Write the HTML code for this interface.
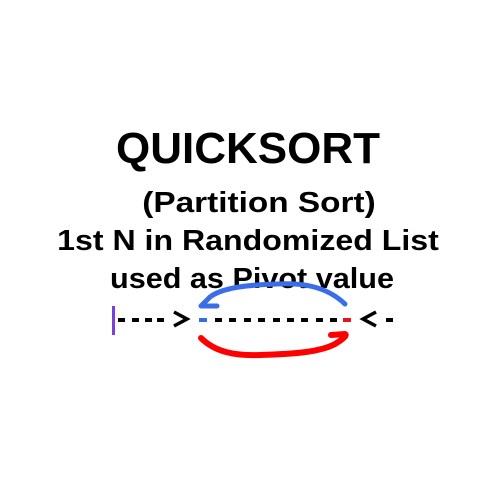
<!DOCTYPE html>
<html><head><style>
html,body{margin:0;padding:0;background:#fff;}
body{width:500px;height:500px;position:relative;overflow:hidden;font-family:"Liberation Sans",sans-serif;font-weight:bold;color:#000;}
.t{position:absolute;left:0;width:500px;text-align:center;line-height:1;white-space:nowrap;transform-origin:center;}
</style></head><body>
<div class="t" style="top:127px;font-size:44px;left:-2px;">QUICKSORT</div>
<div class="t" style="top:189px;font-size:29px;transform:scaleX(1.15);left:9px;">(Partition Sort)</div>
<div class="t" style="top:227px;font-size:29px;transform:scaleX(1.107);left:-2px;">1st N in Randomized List</div>
<div class="t" style="top:265px;font-size:29px;transform:scaleX(1.055);left:2px;">used as Pivot value</div>
<svg width="500" height="500" style="position:absolute;left:0;top:0">
<rect x="112" y="306" width="3" height="29" fill="#7a3fe0"/>
<g fill="#000">
<rect x="118" y="318" width="7" height="4"/>
<rect x="132" y="318" width="7" height="4"/>
<rect x="145" y="318" width="7" height="4"/>
<rect x="157" y="318" width="7" height="4"/>
<rect x="215" y="318" width="7" height="4"/>
<rect x="229" y="318" width="7" height="4"/>
<rect x="244" y="318" width="7" height="4"/>
<rect x="258" y="318" width="7" height="4"/>
<rect x="273" y="318" width="7" height="4"/>
<rect x="287" y="318" width="7" height="4"/>
<rect x="301" y="318" width="7" height="4"/>
<rect x="316" y="318" width="7" height="4"/>
<rect x="330" y="318" width="7" height="4"/>
<rect x="386" y="318" width="7" height="4"/>
</g>
<rect x="199" y="318" width="8" height="4" fill="#2f6fe0"/>
<rect x="343" y="318" width="8" height="4" fill="#e8141c"/>
<polyline points="174,312 187,319 174,326" fill="none" stroke="#000" stroke-width="3.5"/>
<polyline points="376,312 363,319 376,326" fill="none" stroke="#000" stroke-width="3.5"/>
<path d="M345,304 C325,285 300,283 277,284 C245,285 222,288 210,297 L201,306 L217,306" fill="none" stroke="#3a6ee8" stroke-width="5" stroke-linecap="round" stroke-linejoin="round"/>
<path d="M201,338 C215,352 235,356 260,355 C295,354 320,352 335,344 C345,338 347,335 345,334 L331,335" fill="none" stroke="#f00" stroke-width="6" stroke-linecap="round" stroke-linejoin="round"/>
</svg>
</body></html>
